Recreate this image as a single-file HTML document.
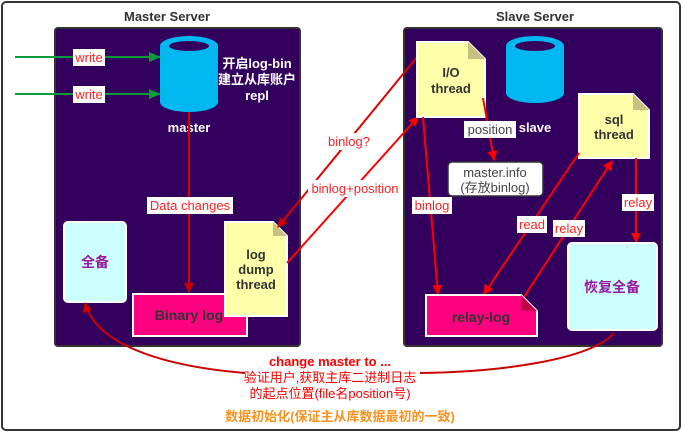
<!DOCTYPE html>
<html><head><meta charset="utf-8"><style>
body{margin:0;width:683px;height:433px;background:#fff;overflow:hidden;font-family:"Liberation Sans","Noto Sans CJK SC",sans-serif}
svg text{font-family:"Liberation Sans","Noto Sans CJK SC",sans-serif}
</style></head><body>
<svg width="683" height="433" viewBox="0 0 683 433">
<defs>
<marker id="ar" markerWidth="10" markerHeight="10" refX="9" refY="5" orient="auto" markerUnits="userSpaceOnUse"><path d="M0,0 L10,5 L0,10 Z" fill="#f00"/></marker>
<marker id="ag" markerWidth="12" markerHeight="10" refX="11" refY="5" orient="auto" markerUnits="userSpaceOnUse"><path d="M0,0 L12,5 L0,10 Z" fill="#0a9a3a"/></marker>
<marker id="ad" markerWidth="10" markerHeight="10" refX="9" refY="5" orient="auto" markerUnits="userSpaceOnUse"><path d="M0,0 L10,5 L0,10 Z" fill="#c00"/></marker>
</defs>
<rect x="2" y="2" width="678" height="428" rx="4" fill="#fff" stroke="#333" stroke-width="2"/>
<text x="167" y="21" text-anchor="middle" font-size="13" font-weight="bold" fill="#333">Master Server</text>
<text x="535" y="21" text-anchor="middle" font-size="13" font-weight="bold" fill="#333">Slave Server</text>
<rect x="55" y="28" width="245" height="318" rx="3" fill="#33005e" stroke="#333" stroke-width="2"/>
<rect x="404" y="28" width="258" height="318" rx="3" fill="#33005e" stroke="#333" stroke-width="2"/>
<!-- master cylinder -->
<path d="M160,46 V102 A29,10 0 0 0 218,102 V46 Z" fill="#00b8ef"/>
<ellipse cx="189" cy="46" rx="29" ry="10" fill="#00b8ef"/>
<ellipse cx="189" cy="46" rx="20" ry="5" fill="#33005e"/>
<text x="189" y="132" text-anchor="middle" font-size="13" font-weight="bold" fill="#fff">master</text>
<text x="257" y="68" text-anchor="middle" font-size="13" font-weight="bold" fill="#fff">开启log-bin</text>
<text x="257" y="84" text-anchor="middle" font-size="13" font-weight="bold" fill="#fff">建立从库账户</text>
<text x="257" y="100" text-anchor="middle" font-size="13" font-weight="bold" fill="#fff">repl</text>
<!-- slave cylinder -->
<path d="M506,46 V93 A29,10 0 0 0 564,93 V46 Z" fill="#00b8ef"/>
<ellipse cx="535" cy="46" rx="29" ry="10" fill="#00b8ef"/>
<ellipse cx="535" cy="46" rx="20" ry="5" fill="#33005e"/>
<text x="535" y="132" text-anchor="middle" font-size="13" font-weight="bold" fill="#fff">slave</text>
<!-- green writes -->
<line x1="15" y1="57" x2="160" y2="57" stroke="#0a9a3a" stroke-width="2" marker-end="url(#ag)"/>
<line x1="15" y1="94" x2="160" y2="94" stroke="#0a9a3a" stroke-width="2" marker-end="url(#ag)"/>
<rect x="73" y="49" width="32" height="17" fill="#fff"/><text x="89" y="62" text-anchor="middle" font-size="13" fill="#f22">write</text>
<rect x="73" y="86" width="32" height="17" fill="#fff"/><text x="89" y="99" text-anchor="middle" font-size="13" fill="#f22">write</text>
<!-- master internals -->
<line x1="189" y1="112" x2="189" y2="292" stroke="#d00" stroke-width="2" marker-end="url(#ad)"/>
<rect x="64" y="222" width="62" height="80" rx="4" fill="#ccffff" stroke="#fff" stroke-width="2"/>
<text x="95" y="267" text-anchor="middle" font-size="14" font-weight="bold" fill="#9a1aa0">全备</text>
<rect x="133" y="294" width="114" height="42" fill="#ff0080" stroke="#fff" stroke-width="2"/>
<text x="189" y="320" text-anchor="middle" font-size="14" font-weight="bold" fill="#333">Binary log</text>
<path d="M225,222 H273 L287,236 V316 H225 Z" fill="#ffffaa" stroke="#fff" stroke-width="2"/>
<path d="M273,222 L273,236 L287,236 Z" fill="#c8c080"/>
<text x="256" y="259" text-anchor="middle" font-size="13" font-weight="bold" fill="#333">log</text>
<text x="256" y="274" text-anchor="middle" font-size="13" font-weight="bold" fill="#333">dump</text>
<text x="256" y="289" text-anchor="middle" font-size="13" font-weight="bold" fill="#333">thread</text>
<rect x="147" y="197" width="86" height="17" fill="#fff"/><text x="190" y="210" text-anchor="middle" font-size="13" fill="#f22">Data changes</text>
<!-- cross arrows -->
<line x1="417" y1="57" x2="278" y2="227" stroke="#d00" stroke-width="2" marker-end="url(#ad)"/>
<line x1="287" y1="263" x2="418" y2="117" stroke="#f00" stroke-width="2" marker-end="url(#ar)"/>
<rect x="325" y="133" width="48" height="17" fill="#fff"/><text x="349" y="146" text-anchor="middle" font-size="13" fill="#f22">binlog?</text>
<rect x="308" y="180" width="95" height="17" fill="#fff"/><text x="355" y="193" text-anchor="middle" font-size="13" fill="#f22">binlog+position</text>
<!-- slave internals -->
<path d="M417,42 H468 L485,59 V117 H417 Z" fill="#ffffaa" stroke="#fff" stroke-width="2"/>
<path d="M468,42 L468,59 L485,59 Z" fill="#c8c080"/>
<text x="451" y="77" text-anchor="middle" font-size="13" font-weight="bold" fill="#333">I/O</text>
<text x="451" y="93" text-anchor="middle" font-size="13" font-weight="bold" fill="#333">thread</text>
<path d="M579,94 H633 L649,110 V158 H579 Z" fill="#ffffaa" stroke="#fff" stroke-width="2"/>
<path d="M633,94 L633,110 L649,110 Z" fill="#c8c080"/>
<text x="614" y="124" text-anchor="middle" font-size="13" font-weight="bold" fill="#333">sql</text>
<text x="614" y="139" text-anchor="middle" font-size="13" font-weight="bold" fill="#333">thread</text>
<line x1="483" y1="98" x2="494" y2="160" stroke="#f00" stroke-width="2" marker-end="url(#ar)"/>
<rect x="448" y="162" width="95" height="34" rx="4" fill="#fff" stroke="#333" stroke-width="1.5"/>
<text x="495" y="177" text-anchor="middle" font-size="13" fill="#444">master.info</text>
<text x="495" y="192" text-anchor="middle" font-size="13" fill="#444">(存放binlog)</text>
<rect x="464" y="121" width="52" height="17" fill="#fff"/><text x="490" y="134" text-anchor="middle" font-size="13" fill="#444">position</text>
<line x1="423" y1="117" x2="438" y2="294" stroke="#f00" stroke-width="2" marker-end="url(#ar)"/>
<line x1="579" y1="153" x2="484" y2="294" stroke="#f00" stroke-width="2" marker-end="url(#ar)"/>
<line x1="524" y1="297" x2="612" y2="161" stroke="#f00" stroke-width="2" marker-end="url(#ar)"/>
<line x1="636" y1="158" x2="636" y2="242" stroke="#f00" stroke-width="2" marker-end="url(#ar)"/>
<path d="M426,295 H521 L537,311 V336 H426 Z" fill="#ff0080" stroke="#fff" stroke-width="2"/>
<path d="M521,295 L521,311 L537,311 Z" fill="#c0004a"/>
<text x="481" y="322" text-anchor="middle" font-size="14" font-weight="bold" fill="#333">relay-log</text>
<rect x="568" y="243" width="89" height="87" rx="4" fill="#ccffff" stroke="#fff" stroke-width="2"/>
<text x="612" y="292" text-anchor="middle" font-size="14" font-weight="bold" fill="#9a1aa0">恢复全备</text>
<rect x="412" y="197" width="40" height="17" fill="#fff"/><text x="432" y="210" text-anchor="middle" font-size="13" fill="#f22">binlog</text>
<rect x="517" y="216" width="30" height="17" fill="#fff"/><text x="532" y="229" text-anchor="middle" font-size="13" fill="#f22">read</text>
<rect x="553" y="220" width="32" height="17" fill="#fff"/><text x="569" y="233" text-anchor="middle" font-size="13" fill="#f22">relay</text>
<rect x="622" y="194" width="32" height="17" fill="#fff"/><text x="638" y="207" text-anchor="middle" font-size="13" fill="#f22">relay</text>
<!-- bottom curve -->
<path d="M614,333 C590,360 500,372 420,373" fill="none" stroke="#c00" stroke-width="2"/>
<path d="M245,373 C150,365 95,340 85,303" fill="none" stroke="#c00" stroke-width="2" marker-end="url(#ad)"/>
<text x="330" y="366" text-anchor="middle" font-size="13" font-weight="bold" fill="#f00">change master to ...</text>
<text x="330" y="382" text-anchor="middle" font-size="13" fill="#f00">验证用户,获取主库二进制日志</text>
<text x="330" y="398" text-anchor="middle" font-size="13" fill="#f00">的起点位置(file名position号)</text>
<text x="340" y="421" text-anchor="middle" font-size="13" font-weight="bold" fill="#f7931e">数据初始化(保证主从库数据最初的一致)</text>
</svg>
</body></html>
